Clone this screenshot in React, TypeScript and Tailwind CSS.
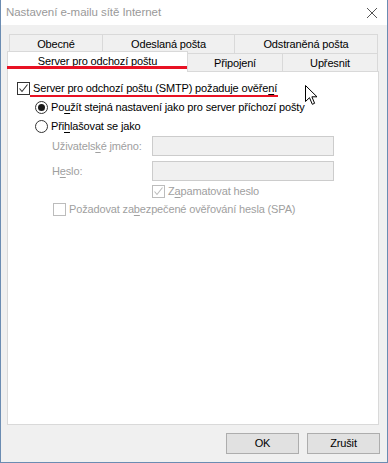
import React from "react";

const font = { fontFamily: '"Liberation Sans", Arial, sans-serif' };

function Check({ checked, disabled }: { checked?: boolean; disabled?: boolean }) {
  return (
    <div
      className={
        "w-[13px] h-[13px] shrink-0 border bg-white flex items-center justify-center " +
        (disabled ? "border-[#bcbcbc]" : "border-[#333333]")
      }
    >
      {checked && (
        <svg width="11" height="11" viewBox="0 0 11 11">
          <path
            d="M1.5 5.5 L4 8.5 L9.5 1.5"
            fill="none"
            stroke={disabled ? "#bcbcbc" : "#333333"}
            strokeWidth="1.1"
          />
        </svg>
      )}
    </div>
  );
}

function Radio({ checked }: { checked?: boolean }) {
  return (
    <div className="w-[13px] h-[13px] shrink-0 rounded-full border border-[#333333] bg-white flex items-center justify-center">
      {checked && <div className="w-[7px] h-[7px] rounded-full bg-[#1a1a1a]" />}
    </div>
  );
}

export default function App() {
  return (
    <div
      className="relative w-[388px] h-[463px] bg-[#f0f0f0] border-l border-r border-b border-[#6b8cb2] flex flex-col text-[11px] tracking-[-0.15px] text-black leading-none whitespace-nowrap"
      style={font}
    >
      {/* Title bar */}
      <div className="h-[25px] bg-white flex items-center justify-between pl-[5px] pr-[9px] shrink-0">
        <span className="text-[11.5px] tracking-[-0.05px] text-[#999999]">Nastavení e-mailu sítě Internet</span>
        <svg width="12" height="12" viewBox="0 0 12 12">
          <path d="M1 1 L11 11 M11 1 L1 11" stroke="#555555" strokeWidth="1" fill="none" />
        </svg>
      </div>

      {/* Body */}
      <div className="flex flex-col pl-[6px] pr-[8px] pt-[9px]">
        {/* Tab row 1 */}
        <div className="flex ml-[2px] h-[19px]">
          <div className="w-[94px] h-[19px] border-t border-l border-r border-[#d9d9d9] flex items-center justify-center pt-[1px]">
            Obecné
          </div>
          <div className="w-[133px] -ml-px h-[19px] border-t border-l border-r border-[#d9d9d9] flex items-center justify-center pt-[1px]">
            Odeslaná pošta
          </div>
          <div className="w-[144px] -ml-px h-[19px] border-t border-l border-r border-[#d9d9d9] flex items-center justify-center pt-[1px]">
            Odstraněná pošta
          </div>
        </div>
        {/* Tab row 2 */}
        <div className="flex h-[18px] items-start">
          <div className="relative z-10 -mt-[2px] w-[181px] h-[21px] bg-white border-t border-l border-r border-[#d9d9d9] flex items-start justify-center pt-[4px]">
            Server pro odchozí poštu
            <div className="absolute left-[-1px] right-0 top-[14px] h-[3px] bg-[#e81123]" />
          </div>
          <div className="w-[96px] -ml-px h-[18px] border-t border-l border-r border-[#d9d9d9] flex items-center justify-center pt-[1px]">
            Připojení
          </div>
          <div className="w-[96px] -ml-px h-[18px] border-t border-l border-r border-[#d9d9d9] flex items-center justify-center pt-[1px]">
            Upřesnit
          </div>
        </div>

        {/* Panel */}
        <div className="w-[372px] h-[354px] bg-white border border-[#d9d9d9] flex flex-col pt-[10px]">
          {/* Row A */}
          <div className="h-[13px] flex items-center pl-[9px]">
            <Check checked />
            <span className="relative ml-[3px]">
              Server pro odchozí poštu (SMTP) požaduje ověře<u className="underline-offset-[2px]">n</u>í
              <span className="absolute left-[-3px] right-[-1px] top-[12px] h-[2px] bg-[#e81123]" />
            </span>
          </div>
          {/* Row B */}
          <div className="h-[13px] mt-[6px] flex items-center pl-[27px]">
            <Radio checked />
            <span className="ml-[3px]">
              Po<u className="underline-offset-[2px]">u</u>žít stejná nastavení jako pro server příchozí pošty
            </span>
          </div>
          {/* Row C */}
          <div className="h-[13px] mt-[6px] flex items-center pl-[27px]">
            <Radio />
            <span className="ml-[3px]">
              Při<u className="underline-offset-[2px]">h</u>lašovat se jako
            </span>
          </div>
          {/* Row D */}
          <div className="h-[20px] mt-[3px] flex items-center pl-[44px]">
            <span className="w-[100px] text-[#a0a0a0]">
              Uživatels<u className="underline-offset-[2px]">k</u>é jméno:
            </span>
            <div className="w-[182px] h-[20px] bg-[#f0f0f0] border border-[#cccccc]" />
          </div>
          {/* Row E */}
          <div className="h-[20px] mt-[5px] flex items-center pl-[44px]">
            <span className="w-[100px] text-[#a0a0a0]">
              H<u className="underline-offset-[2px]">e</u>slo:
            </span>
            <div className="w-[182px] h-[20px] bg-[#f0f0f0] border border-[#cccccc]" />
          </div>
          {/* Row F */}
          <div className="h-[13px] mt-[4px] flex items-center pl-[144px]">
            <Check checked disabled />
            <span className="ml-[3px] text-[#a0a0a0]">
              Z<u className="underline-offset-[2px]">a</u>pamatovat heslo
            </span>
          </div>
          {/* Row G */}
          <div className="h-[13px] mt-[5px] flex items-center pl-[45px]">
            <Check disabled />
            <span className="ml-[3px] text-[#a0a0a0]">
              Požadovat za<u className="underline-offset-[2px]">b</u>ezpečené ověřování hesla (SPA)
            </span>
          </div>
        </div>

        {/* Buttons */}
        <div className="flex justify-end gap-[8px] mt-[8px] -mr-[1px]">
          <button className="w-[73px] h-[21px] bg-[#e1e1e1] border border-[#adadad] text-[11px] text-black leading-none">
            OK
          </button>
          <button className="w-[73px] h-[21px] bg-[#e1e1e1] border border-[#adadad] text-[11px] text-black leading-none">
            Zrušit
          </button>
        </div>
      </div>

      {/* Mouse cursor */}
      <svg
        className="absolute left-[304px] top-[85px] z-20"
        width="13"
        height="21"
        viewBox="0 0 13 21"
      >
        <path
          d="M0.5 0.5 L0.5 16.5 L4.5 12.7 L7.3 19.3 L9.6 18.3 L6.9 11.8 L12 11.8 Z"
          fill="#ffffff"
          stroke="#000000"
          strokeWidth="1"
          strokeLinejoin="miter"
        />
      </svg>
    </div>
  );
}
